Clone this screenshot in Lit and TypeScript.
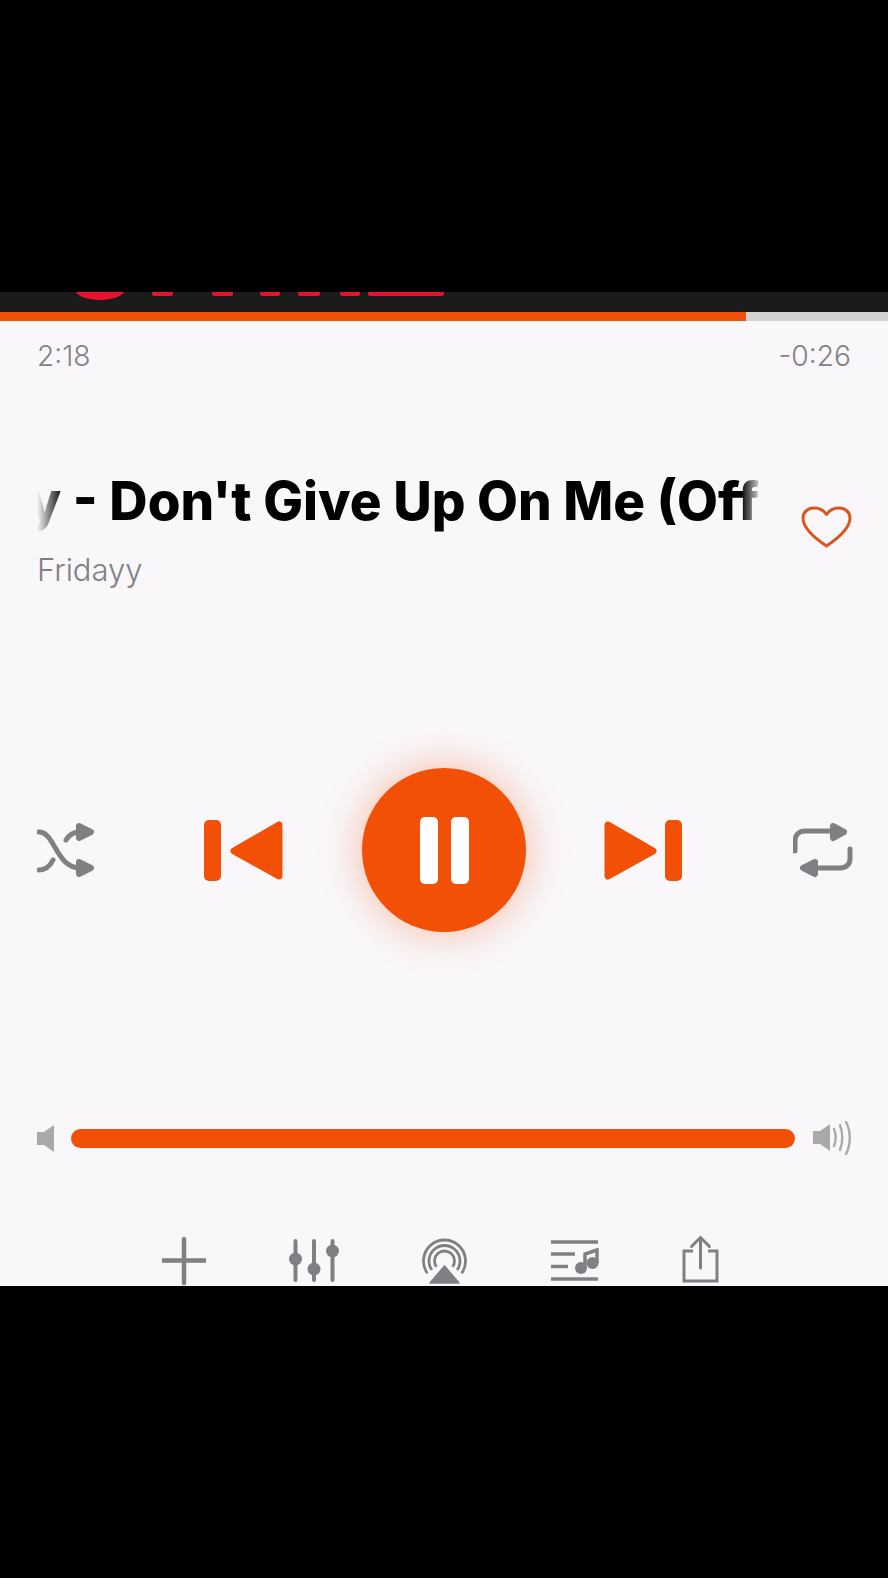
import { LitElement, html, css, svg } from "lit";
import { customElement } from "lit/decorators.js";

const box = (x: number, y: number, w: number, h: number, body: unknown, cls = "") => html`<svg class=${cls} width=${w} height=${h} viewBox="${x} ${y} ${w} ${h}">${body}</svg>`;

const ring = (r: number) => {
  const cx = 444.5, cy = 1260, a = 0.95;
  const dx = r * Math.sin(a), dy = r * Math.cos(a);
  return svg`<path d="M${cx - dx} ${cy + dy}A${r} ${r} 0 1 1 ${cx + dx} ${cy + dy}"/>`;
};

@customElement("app-root")
export class AppRoot extends LitElement {
  static styles = css`
    :host { display: block; height: 1578px; background: #000; overflow: hidden; font-family: Inter, "Liberation Sans", sans-serif; }
    svg { display: block; flex: none; }
    .top { height: 292px; background: #000; }
    .art { height: 20px; background: #1b1b1c; overflow: hidden; }
    .progress { height: 9px; background: #d2d2d2; }
    .fill { height: 100%; width: 746px; background: #f25007; }
    .panel { height: 965px; background: #f9f7fa; overflow: hidden; padding: 0 35px 0 37px; box-sizing: border-box; }
    .times { display: flex; justify-content: space-between; padding: 19px 2px 0 0; height: 32px; font-size: 28.2px; line-height: 32px; font-weight: 300; color: #818185; }
    .head { display: flex; justify-content: space-between; align-items: flex-start; margin-top: 95px; height: 65px; }
    .marquee { width: 726px; overflow: hidden; height: 68px; -webkit-mask-image: linear-gradient(90deg, transparent 0, #000 26px, #000 704px, transparent 100%); mask-image: linear-gradient(90deg, transparent 0, #000 26px, #000 704px, transparent 100%); }
    .title { display: block; white-space: nowrap; font-size: 53px; line-height: 68px; font-weight: 800; color: #000; transform: translateX(-173px); }
    .heart { margin: 38px -1px 0 0; }
    .artist { font-size: 31px; line-height: 38px; font-weight: 300; color: #808084; margin-top: 19px; }
    .controls { display: flex; justify-content: space-between; align-items: center; margin-top: 179px; }
    .mid { display: flex; align-items: center; gap: 78px; margin-right: 2px; }
    .play { width: 164px; height: 164px; border-radius: 50%; background: #f25007; box-shadow: 0 0 42px rgba(244, 82, 10, 0.38); display: flex; align-items: center; justify-content: center; gap: 13px; }
    .bar { width: 18px; height: 67px; border-radius: 5px; background: #fff; }
    .volume { display: flex; align-items: center; gap: 17px; margin-top: 189px; }
    .track { flex: 1; height: 19px; border-radius: 9.5px; background: #f25007; margin: 0 1px 0 -1px; }
    .actions { display: flex; justify-content: center; align-items: flex-start; gap: 83px; margin: 80px 9px 0 0; }
  `;

  render() {
    const gray = "#808084";
    const lg = "#a9a9ab";
    const o = "#f25007";
    return html`
      <div class="top"></div>
      <div class="art">
        ${box(0, 292, 888, 20, svg`
          <ellipse cx="100" cy="288" rx="26" ry="12" fill="#e8122e"/>
          ${[[152, 21], [212, 21], [260, 20], [298, 22], [340, 20], [368, 76]].map(([x, w]) => svg`<rect x=${x} y="290" width=${w} height="6" rx="2" fill="#e0142f"/>`)}
        `)}
      </div>
      <div class="progress"><div class="fill"></div></div>
      <div class="panel">
        <div class="times"><span>2:18</span><span>-0:26</span></div>
        <div class="head">
          <div class="marquee"><span class="title">Fridayy - Don't Give Up On Me (Official Video)</span></div>
          ${box(800, 505, 55, 44, svg`<path d="M827.5 546C820 541 804 530 804 518C804 512 809 508 815 508C821 508 825 510.500 827.500 514.500C830 510.500 834 508 840 508C846 508 851 512 851 518C851 530 835 541 827.500 546Z" fill="none" stroke="#d9561c" stroke-width="3" stroke-linejoin="round"/>`, "heart")}
        </div>
        <div class="artist">Fridayy</div>
        <div class="controls">
          ${box(37, 820, 58, 60, svg`
            <g fill="none" stroke=${gray} stroke-width="5" stroke-linecap="round">
              <path d="M39 832C55 832 56 868 80 868"/>
              <path d="M39 870C46 870 50 866 53 860"/>
              <path d="M66 840C69 835 73 832 80 832"/>
            </g>
            <path d="M79 826L91 832L79 838Z M79 862L91 868L79 874Z" fill=${gray} stroke=${gray} stroke-width="6" stroke-linejoin="round"/>
          `)}
          <div class="mid">
            ${box(203, 820, 80, 61, svg`
              <rect x="203" y="820" width="17" height="61" rx="5" fill=${o}/>
              <path d="M233 851L278 825V876Z" fill=${o} stroke=${o} stroke-width="7" stroke-linejoin="round"/>
            `)}
            <div class="play"><div class="bar"></div><div class="bar"></div></div>
            ${box(605, 820, 78, 61, svg`
              <path d="M609 825L654 851L609 876Z" fill=${o} stroke=${o} stroke-width="7" stroke-linejoin="round"/>
              <rect x="666" y="820" width="17" height="61" rx="5" fill=${o}/>
            `)}
          </div>
          ${box(793, 820, 60, 60, svg`
            <g fill="none" stroke=${gray} stroke-width="5" stroke-linecap="round">
              <path d="M795 851V841C795 835 799 831 805 831H834"/>
              <path d="M850 849V859C850 864 846 868 840 868H813"/>
            </g>
            <path d="M833 826L844 832L833 838Z M815 862L803 868L815 874Z" fill=${gray} stroke=${gray} stroke-width="6" stroke-linejoin="round"/>
          `)}
        </div>
        <div class="volume">
          ${box(36, 1124, 18, 29, svg`<path d="M36 1132H43L53 1125V1152L43 1145H36Z" fill=${lg}/>`)}
          <div class="track"></div>
          ${box(813, 1122, 40, 34, svg`
            <path d="M813 1132H820L830 1125V1152L820 1145H813Z" fill=${lg}/>
            <g fill="none" stroke=${lg} stroke-width="2.400" stroke-linecap="round">
              <path d="M834 1130C836 1135 836 1142 834 1147"/>
              <path d="M840 1126C843 1133 843 1144 840 1151"/>
              <path d="M846 1123C851 1132 851 1145 846 1155"/>
            </g>
          `)}
        </div>
        <div class="actions">
          ${box(163, 1234, 44, 52, svg`<path d="M185 1238V1282M163 1259.500H207" stroke=${gray} stroke-width="4.500" stroke-linecap="round"/>`)}
          ${box(290, 1234, 50, 52, svg`
            <path d="M296.500 1240V1279M315 1240V1279M333.500 1240V1279" stroke=${gray} stroke-width="4" stroke-linecap="round"/>
            <circle cx="296.500" cy="1258" r="6.500" fill=${gray}/><circle cx="315" cy="1268" r="6.500" fill=${gray}/><circle cx="333.500" cy="1250" r="6.500" fill=${gray}/>
          `)}
          ${box(422, 1234, 46, 52, svg`
            <g fill="none" stroke=${gray} stroke-width="2.800">${ring(21)}${ring(15.5)}${ring(10)}</g>
            <path d="M444.500 1265L459 1282H430Z" fill=${gray} stroke=${gray} stroke-width="1.500" stroke-linejoin="round"/>
          `)}
          ${box(551, 1234, 48, 52, svg`
            <path d="M551 1241H598M551 1253H575M551 1265.500H568M551 1278H598" stroke=${gray} stroke-width="3.500"/>
            <circle cx="581" cy="1267" r="6" fill=${gray}/><circle cx="592.500" cy="1262" r="6" fill=${gray}/>
            <path d="M585 1267V1253L597 1249V1262" fill="none" stroke=${gray} stroke-width="3.500"/>
          `)}
          ${box(683, 1234, 37, 52, svg`
            <path d="M694 1250H685V1280H718V1250H709" fill="none" stroke=${gray} stroke-width="3"/>
            <path d="M701.500 1267V1237M692.500 1245.500L701.500 1236.500L710.500 1245.500" fill="none" stroke=${gray} stroke-width="3" stroke-linecap="round"/>
          `)}
        </div>
      </div>
    `;
  }
}
